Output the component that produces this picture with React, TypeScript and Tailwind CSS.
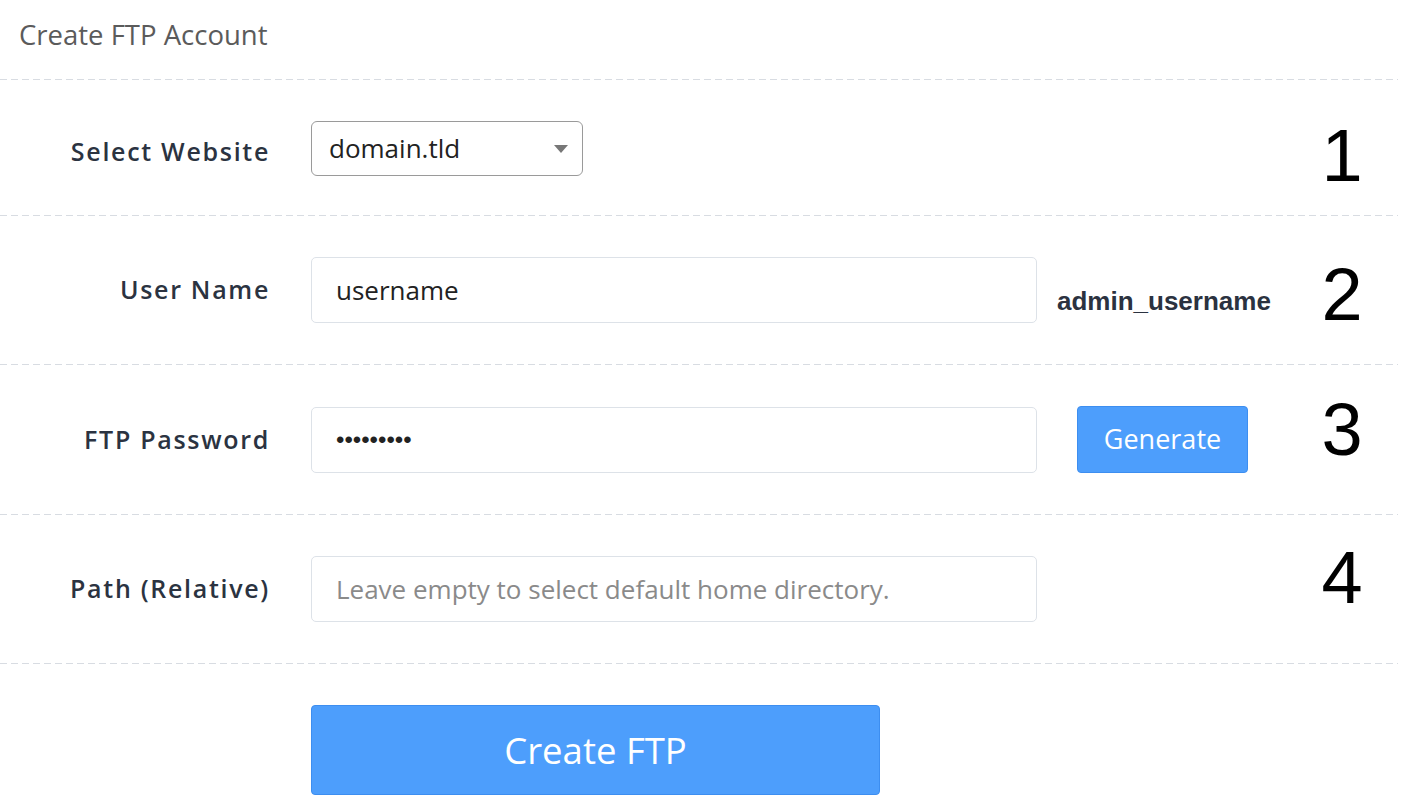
import React from "react";

const dash =
  "h-px w-full bg-[linear-gradient(to_right,#d8dce2_62%,transparent_0)] bg-[length:11px_1px] bg-repeat-x";

const labelCls =
  "w-[270px] shrink-0 text-right text-[25px] font-semibold tracking-[1.7px] text-[#2b3341]";

function Num({ n, shift }: { n: string; shift: string }) {
  return (
    <div className="flex h-0 w-[90px] items-center justify-center overflow-visible">
      <span
        className={
          "block font-['Liberation_Sans',Arial,sans-serif] text-[74px] leading-none text-black " +
          shift
        }
      >
        {n}
      </span>
    </div>
  );
}

function Row({
  label,
  children,
  extra,
  num,
}: {
  label: string;
  children: React.ReactNode;
  extra?: React.ReactNode;
  num: React.ReactNode;
}) {
  return (
    <>
      <div className="flex items-center py-[41px]">
        <div className={labelCls}>{label}</div>
        <div className="ml-[41px] w-[726px] shrink-0">{children}</div>
        <div className="ml-[20px] w-[240px] shrink-0">{extra}</div>
        {num}
      </div>
      <div className={dash} />
    </>
  );
}

const inputCls =
  "block h-[66px] w-full rounded-[5px] border border-[#dde2e8] bg-white px-[24px] text-[26px] text-[#222] outline-none placeholder:text-[#8a8a8a]";

export default function App() {
  return (
    <div className="min-h-[812px] w-[1417px] bg-white font-['Open_Sans',sans-serif]">
      <div className="w-[1398px]">
        <div className="flex h-[79px] items-center pl-[19px] pb-[10px] text-[27.5px] text-[#5b5b5b]">
          Create FTP Account
        </div>
        <div className={dash} />

        <div className="flex items-center pt-[41px] pb-[39px]">
          <div className={labelCls + " pt-[6px]"}>Select Website</div>
          <div className="ml-[41px] w-[726px] shrink-0">
            <div className="flex h-[55px] w-[272px] items-center justify-between rounded-[6px] border border-[#9a9a9a] bg-white pl-[17px] pr-[14px] text-[26px] text-[#222]">
              <span>domain.tld</span>
              <svg width="14" height="8" viewBox="0 0 14 8">
                <path d="M0 0 L14 0 L7 8 Z" fill="#777" />
              </svg>
            </div>
          </div>
          <div className="ml-[20px] w-[240px] shrink-0" />
          <Num n="1" shift="translate-y-[7px]" />
        </div>
        <div className={dash} />

        <Row
          label="User Name"
          num={<Num n="2" shift="translate-y-[5px]" />}
          extra={
            <span className="block pt-[22px] font-['Liberation_Sans',Arial,sans-serif] text-[26px] font-bold text-[#2b3240]">
              admin_username
            </span>
          }
        >
          <input className={inputCls} defaultValue="username" readOnly />
        </Row>

        <Row
          label="FTP Password"
          num={<Num n="3" shift="-translate-y-[10px]" />}
          extra={
            <button className="ml-[20px] h-[67px] w-[171px] rounded-[4px] border border-[#3d8ef0] bg-[#4d9efc] text-[27px] text-white">
              Generate
            </button>
          }
        >
          <input
            className={inputCls + " font-['Liberation_Sans',Arial,sans-serif] !text-[24px]"}
            type="password"
            defaultValue="123456789"
            readOnly
          />
        </Row>

        <Row label="Path (Relative)" num={<Num n="4" shift="-translate-y-[11px]" />}>
          <input
            className={inputCls}
            placeholder="Leave empty to select default home directory."
            readOnly
          />
        </Row>

        <div className="pt-[41px] pl-[311px]">
          <button className="h-[90px] w-[569px] rounded-[4px] border border-[#3d8ef0] bg-[#4d9efc] text-[36.5px] text-white">
            Create FTP
          </button>
        </div>
      </div>
    </div>
  );
}
